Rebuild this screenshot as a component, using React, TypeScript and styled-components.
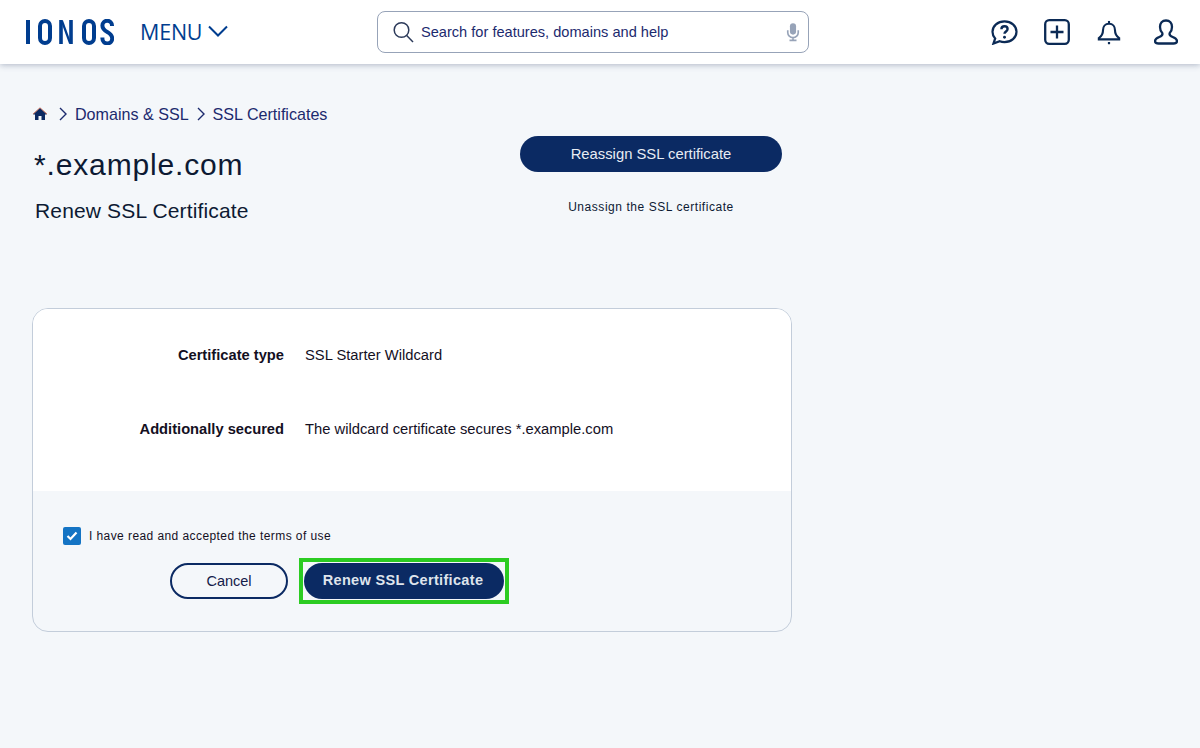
import React from "react";
import styled, { createGlobalStyle } from "styled-components";

const Global = createGlobalStyle`
  html, body { margin: 0; padding: 0; background: #f4f7fa; }
  body { font-family: "Liberation Sans", Arial, sans-serif; color: #0d1a33; }
  * { box-sizing: border-box; }
`;
const Page = styled.div`
  width: 1200px;
  height: 748px;
  overflow: hidden;
  background: #f4f7fa;
`;
const Header = styled.header`
  height: 64px;
  background: #fff;
  box-shadow: 0 1px 6px rgba(90, 105, 135, 0.45);
  display: flex;
  align-items: center;
  padding-left: 26px;
`;
const Logo = styled.svg`
  width: 88px;
  height: 26px;
  flex: none;
`;
const MenuButton = styled.div`
  display: flex;
  align-items: center;
  margin-left: 26px;
  padding-bottom: 2px;
  gap: 6px;
  width: 237px;
  color: #003d8f;
  font-family: "Open Sans", sans-serif;
  font-size: 21.5px;
  font-weight: 500;
  letter-spacing: -0.2px;
`;
const SearchBox = styled.div`
  width: 432px;
  height: 42px;
  border: 1px solid #97a3b8;
  border-radius: 8px;
  display: flex;
  align-items: center;
  padding: 0 8px 0 15px;
  gap: 7px;
  background: #fff;
  color: #1c2a6e;
  font-size: 14.6px;
`;
const SearchText = styled.span`
  flex: 1;
`;
const HeaderIcons = styled.div`
  display: flex;
  align-items: center;
  margin-left: 179px;
  gap: 20px;
`;
const IconSlot = styled.span<{ $w: number }>`
  width: ${(p) => p.$w}px;
  display: flex;
  justify-content: center;
`;
const Main = styled.main`
  width: 760px;
  margin-left: 32px;
`;
const Breadcrumb = styled.nav`
  display: flex;
  align-items: center;
  height: 20px;
  margin-top: 40px;
  color: #1c2a6e;
  font-size: 16.1px;
  gap: 7px;
`;
const Chevron = styled.svg<{ $lead?: boolean }>`
  flex: none;
  margin-left: ${(p) => (p.$lead ? "3px" : "0")};
`;
const HomeIcon = styled.svg`
  flex: none;
`;
const TitleBar = styled.div`
  display: flex;
  justify-content: space-between;
  margin-top: 12px;
  height: 172px;
`;
const TitleCol = styled.div`
  padding-left: 2px;
`;
const Title = styled.h1`
  margin: 12px 0 0;
  font-weight: 400;
  font-size: 30px;
  line-height: 34px;
  letter-spacing: 0.85px;
  color: #0d1a33;
`;
const Subtitle = styled.h2`
  margin: 17px 0 0 1px;
  font-weight: 400;
  font-size: 21px;
  line-height: 24px;
  letter-spacing: 0.15px;
  color: #0d1a33;
`;
const ActionCol = styled.div`
  width: 262px;
  margin-right: 10px;
  display: flex;
  flex-direction: column;
  align-items: center;
`;
const Pill = styled.div<{ $bold?: boolean }>`
  height: 36px;
  border-radius: 18px;
  background: #0b2a63;
  color: ${(p) => (p.$bold ? "#dfe4ec" : "#e8ecf3")};
  font-size: ${(p) => (p.$bold ? "14.5px" : "14.8px")};
  font-weight: ${(p) => (p.$bold ? 700 : 400)};
  padding: ${(p) => (p.$bold ? "0 2px 2px 0" : "0")};
  display: flex;
  align-items: center;
  justify-content: center;
  width: 100%;
  letter-spacing: ${(p) => (p.$bold ? "0.33px" : "0")};
`;
const SmallLink = styled.div`
  margin-top: 27px;
  font-size: 12px;
  line-height: 16px;
  letter-spacing: 0.55px;
  color: #0d1a33;
`;
const Card = styled.section`
  height: 324px;
  border: 1px solid #c3cdda;
  border-radius: 16px;
  overflow: hidden;
  display: flex;
  flex-direction: column;
`;
const CardBody = styled.div`
  height: 182px;
  background: #fff;
  padding-top: 37px;
  display: flex;
  flex-direction: column;
  gap: 56px;
`;
const Row = styled.div`
  display: grid;
  grid-template-columns: 251px 1fr;
  column-gap: 21px;
  font-size: 14.75px;
  line-height: 18px;
  color: #14101f;
`;
const Label = styled.div`
  font-weight: 700;
  font-size: 14.7px;
  text-align: right;
`;
const CardFooter = styled.div`
  flex: 1;
  padding: 36px 0 0 30px;
`;
const CheckRow = styled.label`
  display: flex;
  align-items: center;
  gap: 8px;
  font-size: 12px;
  letter-spacing: 0.42px;
  color: #14101f;
`;
const CheckBox = styled.span`
  width: 18px;
  height: 18px;
  border-radius: 2px;
  background: #1474c4;
  display: flex;
  align-items: center;
  justify-content: center;
`;
const Actions = styled.div`
  display: flex;
  align-items: center;
  margin: 13px 0 0 107px;
  gap: 11px;
`;
const CancelButton = styled.div`
  width: 118px;
  height: 36px;
  border: 2px solid #0b2a63;
  border-radius: 18px;
  display: flex;
  align-items: center;
  justify-content: center;
  font-size: 14.5px;
  color: #14204a;
`;
const Highlight = styled.div`
  width: 210px;
  border: 4px solid #2ccc22;
  padding: 1px;
`;

const Mic = () => (
  <svg width="14" height="20" viewBox="0 0 16 22" fill="none">
    <rect x="4.5" y="1" width="7" height="13" rx="3.5" fill="#97a3b8" />
    <path d="M2 9v2.5a6 6 0 0 0 12 0V9M8 17.5V20M4 20.5h8" stroke="#97a3b8" strokeWidth="1.9" />
  </svg>
);

export default function App() {
  return (
    <Page>
      <Global />
      <Header>
        <Logo viewBox="0 0 88 26" fill="none" stroke="#003d8f" strokeWidth="4">
          <path d="M2 1v24" />
          <rect x="14" y="2" width="10" height="22" rx="5" />
          <path d="M35 1v24M45 1v24" strokeWidth="3.6" />
          <path d="M36 2l8 22" strokeWidth="2.2" />
          <rect x="58" y="2" width="10" height="22" rx="5" />
          <path d="M86 7V6.5a4.8 4.8 0 0 0-9.6 0c0 7.5 9.8 5.500 9.800 13 a4.800 4.800 0 0 1-9.800 0V18.500" />
        </Logo>
        <MenuButton>
          MENU
          <svg width="20" height="12" viewBox="0 0 20 12" fill="none">
            <path d="M1 1.500l9 9 9-9" stroke="#003d8f" strokeWidth="2" />
          </svg>
        </MenuButton>
        <SearchBox>
          <svg width="21" height="22" viewBox="0 0 21 22" fill="none" stroke="#2c3a5a" strokeWidth="1.500">
            <circle cx="8.500" cy="9" r="7.300" />
            <path d="M13.700 14.500l6.300 6.500" />
          </svg>
          <SearchText>Search for features, domains and help</SearchText>
          <Mic />
        </SearchBox>
        <HeaderIcons>
          <IconSlot $w={32}>
            <svg width="27" height="25" viewBox="0 0 28 26" fill="none" stroke="#0b2a55" strokeWidth="2.300">
              <path d="M14 1.500c7 0 12.500 4.700 12.500 10.800S21 23 14 23c-2 0-3.500-.3-5-.9L2.500 24.500l1.800-5.300C2.500 17.300 1.500 15 1.500 12.300 1.500 6.200 7 1.500 14 1.500z" />
              <path d="M10.800 9.500c0-1.800 1.400-3 3.200-3s3.200 1.100 3.200 2.800c0 2.600-3.200 2.600-3.200 5" strokeWidth="2.500" />
              <circle cx="14" cy="18" r="1.500" fill="#0b2a55" stroke="none" />
            </svg>
          </IconSlot>
          <IconSlot $w={34}>
            <svg width="26" height="26" viewBox="0 0 26 26" fill="none" stroke="#0b2a55" strokeWidth="2.300">
              <rect x="1.200" y="1.200" width="23.600" height="23.600" rx="4" />
              <path d="M13 6.500v13M6.500 13h13" />
            </svg>
          </IconSlot>
          <IconSlot $w={30}>
            <svg width="24" height="27" viewBox="0 0 26 27" fill="none" stroke="#0b2a55" strokeWidth="2.300">
              <path d="M13 4c-4.200 0-6.500 3-6.500 7 0 4-1.500 6.500-4.500 8.500v1.500h22v-1.500c-3-2-4.500-4.500-4.500-8.500 0-4-2.300-7-6.500-7z" />
              <path d="M13 1v3" />
              <path d="M11.800 25h2.400" strokeWidth="2.400" />
            </svg>
          </IconSlot>
          <IconSlot $w={44}>
            <svg width="24" height="26" viewBox="0 0 24 26" fill="none" stroke="#0b2a55" strokeWidth="2.300">
              <path d="M12 1.500c-3.800 0-6 2.800-6 6.500 0 2.700 1 4.700 2.300 6 .6 1.800-.5 3-3 4C2.500 19.100 1 20.300 1 22c0 1.700 1.600 2.500 3.500 2.500h15c1.900 0 3.500-.8 3.500-2.500 0-1.700-1.500-2.900-4.300-4-2.500-1-3.600-2.200-3-4C17 12.700 18 10.700 18 8c0-3.700-2.200-6.500-6-6.500z" />
            </svg>
          </IconSlot>
        </HeaderIcons>
      </Header>
      <Main>
        <Breadcrumb>
          <HomeIcon width="16" height="14" viewBox="0 0 16 14">
            <path d="M8 1L1 7.500h2V13h3.500V9h3v4H13V7.500h2z" fill="#0b2a63" />
            <path d="M1 7L8 .8 15 7" fill="none" stroke="#c0563a" strokeWidth="0.8" />
          </HomeIcon>
          <Chevron $lead width="10" height="14" viewBox="0 0 10 14" fill="none" stroke="#1c2a6e" strokeWidth="1.400">
            <path d="M2 1l6 6-6 6" />
          </Chevron>
          <span>Domains &amp; SSL</span>
          <Chevron width="10" height="14" viewBox="0 0 10 14" fill="none" stroke="#1c2a6e" strokeWidth="1.400">
            <path d="M2 1l6 6-6 6" />
          </Chevron>
          <span>SSL Certificates</span>
        </Breadcrumb>
        <TitleBar>
          <TitleCol>
            <Title>*.example.com</Title>
            <Subtitle>Renew SSL Certificate</Subtitle>
          </TitleCol>
          <ActionCol>
            <Pill>Reassign SSL certificate</Pill>
            <SmallLink>Unassign the SSL certificate</SmallLink>
          </ActionCol>
        </TitleBar>
        <Card>
          <CardBody>
            <Row>
              <Label>Certificate type</Label>
              <div>SSL Starter Wildcard</div>
            </Row>
            <Row>
              <Label>Additionally secured</Label>
              <div>The wildcard certificate secures *.example.com</div>
            </Row>
          </CardBody>
          <CardFooter>
            <CheckRow>
              <CheckBox>
                <svg width="12" height="10" viewBox="0 0 12 10" fill="none" stroke="#fff" strokeWidth="2.200">
                  <path d="M1.500 5l3 3 6-6.500" />
                </svg>
              </CheckBox>
              I have read and accepted the terms of use
            </CheckRow>
            <Actions>
              <CancelButton>Cancel</CancelButton>
              <Highlight>
                <Pill $bold>Renew SSL Certificate</Pill>
              </Highlight>
            </Actions>
          </CardFooter>
        </Card>
      </Main>
    </Page>
  );
}
